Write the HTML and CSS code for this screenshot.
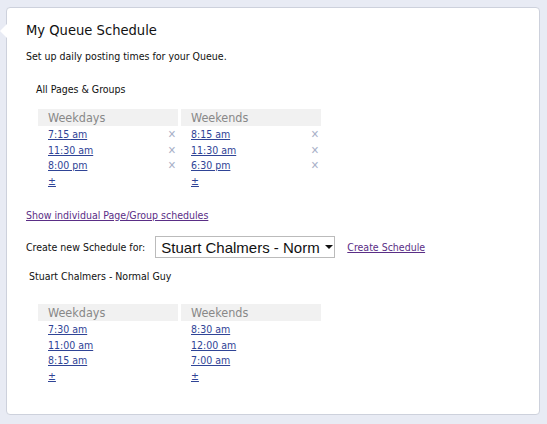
FILE: index.html
```html
<!DOCTYPE html>
<html lang="en">
<head>
  <meta charset="UTF-8">
  <title>My Queue Schedule</title>
  <link rel="stylesheet" href="styles.css">
</head>
<body>
  <div class="card">
    <h1>My Queue Schedule</h1>
    <p class="intro">Set up daily posting times for your Queue.</p>

    <div class="group-name">All Pages &amp; Groups</div>
    <div class="schedule">
      <div class="col">
        <div class="head">Weekdays</div>
        <div class="slot"><a href="#">7:15 am</a><span class="del">&#x2715;</span></div>
        <div class="slot"><a href="#">11:30 am</a><span class="del">&#x2715;</span></div>
        <div class="slot"><a href="#">8:00 pm</a><span class="del">&#x2715;</span></div>
        <div class="slot"><a href="#">&plusmn;</a></div>
      </div>
      <div class="col">
        <div class="head">Weekends</div>
        <div class="slot"><a href="#">8:15 am</a><span class="del">&#x2715;</span></div>
        <div class="slot"><a href="#">11:30 am</a><span class="del">&#x2715;</span></div>
        <div class="slot"><a href="#">6:30 pm</a><span class="del">&#x2715;</span></div>
        <div class="slot"><a href="#">&plusmn;</a></div>
      </div>
    </div>

    <a class="visited toggle" href="#">Show individual Page/Group schedules</a>

    <div class="create">
      <span>Create new Schedule for:</span>
      <div class="select">Stuart Chalmers - Norm<span class="caret"></span></div>
      <a class="visited" href="#">Create Schedule</a>
    </div>

    <div class="group-name owner">Stuart Chalmers - Normal Guy</div>
    <div class="schedule second">
      <div class="col">
        <div class="head">Weekdays</div>
        <div class="slot"><a href="#">7:30 am</a></div>
        <div class="slot"><a href="#">11:00 am</a></div>
        <div class="slot"><a href="#">8:15 am</a></div>
        <div class="slot"><a href="#">&plusmn;</a></div>
      </div>
      <div class="col">
        <div class="head">Weekends</div>
        <div class="slot"><a href="#">8:30 am</a></div>
        <div class="slot"><a href="#">12:00 am</a></div>
        <div class="slot"><a href="#">7:00 am</a></div>
        <div class="slot"><a href="#">&plusmn;</a></div>
      </div>
    </div>
  </div>
</body>
</html>
```

FILE: styles.css
```css
body {
  margin:0;
  padding:7px 7px 9px 6px;
  background:#e8ebf4;
  font-family:"DejaVu Sans Condensed", "DejaVu Sans", sans-serif;
  font-size:10.5px;
  color:#111;
}

.card {
  position:relative;
  height:408px;
  box-sizing:border-box;
  background:#fff;
  border:1px solid #cdd1dc;
  border-radius:4px;
  padding:12px 19px 0 19px;
}

.card:before {
  content:"";
  position:absolute;
  left:-7px;
  top:16px;
  width:0;
  height:0;
  border-top:7px solid transparent;
  border-bottom:7px solid transparent;
  border-right:7px solid #fff;
}

h1 {
  font-weight:normal;
  font-size:14.6px;
  margin:0;
  line-height:20px;
}

.intro {
  margin:10px 0 0;
}

.group-name {
  margin:21px 0 0 10px;
}

.group-name.owner {
  margin:12px 0 0 3px;
}

.schedule {
  display:flex;
  gap:3px;
  margin:14px 0 0 12px;
}

.schedule.second {
  margin-top:22px;
}

.col {
  width:140px;
}

.head {
  background:#f1f1f1;
  color:#888;
  font-size:12.5px;
  line-height:17px;
  padding-left:10px;
  margin-bottom:1px;
}

.slot {
  display:flex;
  justify-content:space-between;
  line-height:15.5px;
  padding-left:10px;
  padding-right:2px;
}

a {
  color:#2f4496;
}

.visited {
  color:#5a2e86;
}

.del {
  color:#a8b0c8;
  font-size:11px;
}

.toggle {
  display:block;
  margin-top:20px;
}

.create {
  display:flex;
  align-items:center;
  margin-top:15px;
}

.select {
  display:flex;
  align-items:center;
  margin-left:10px;
  margin-right:12px;
  width:180px;
  height:22px;
  box-sizing:border-box;
  border:1px solid #bbb;
  font-family:"Liberation Sans", Arial, sans-serif;
  font-size:15px;
  color:#111;
  padding-left:5px;
  white-space:nowrap;
  overflow:hidden;
}

.caret {
  margin-left:5px;
  border-left:4px solid transparent;
  border-right:4px solid transparent;
  border-top:4px solid #111;
}
```
